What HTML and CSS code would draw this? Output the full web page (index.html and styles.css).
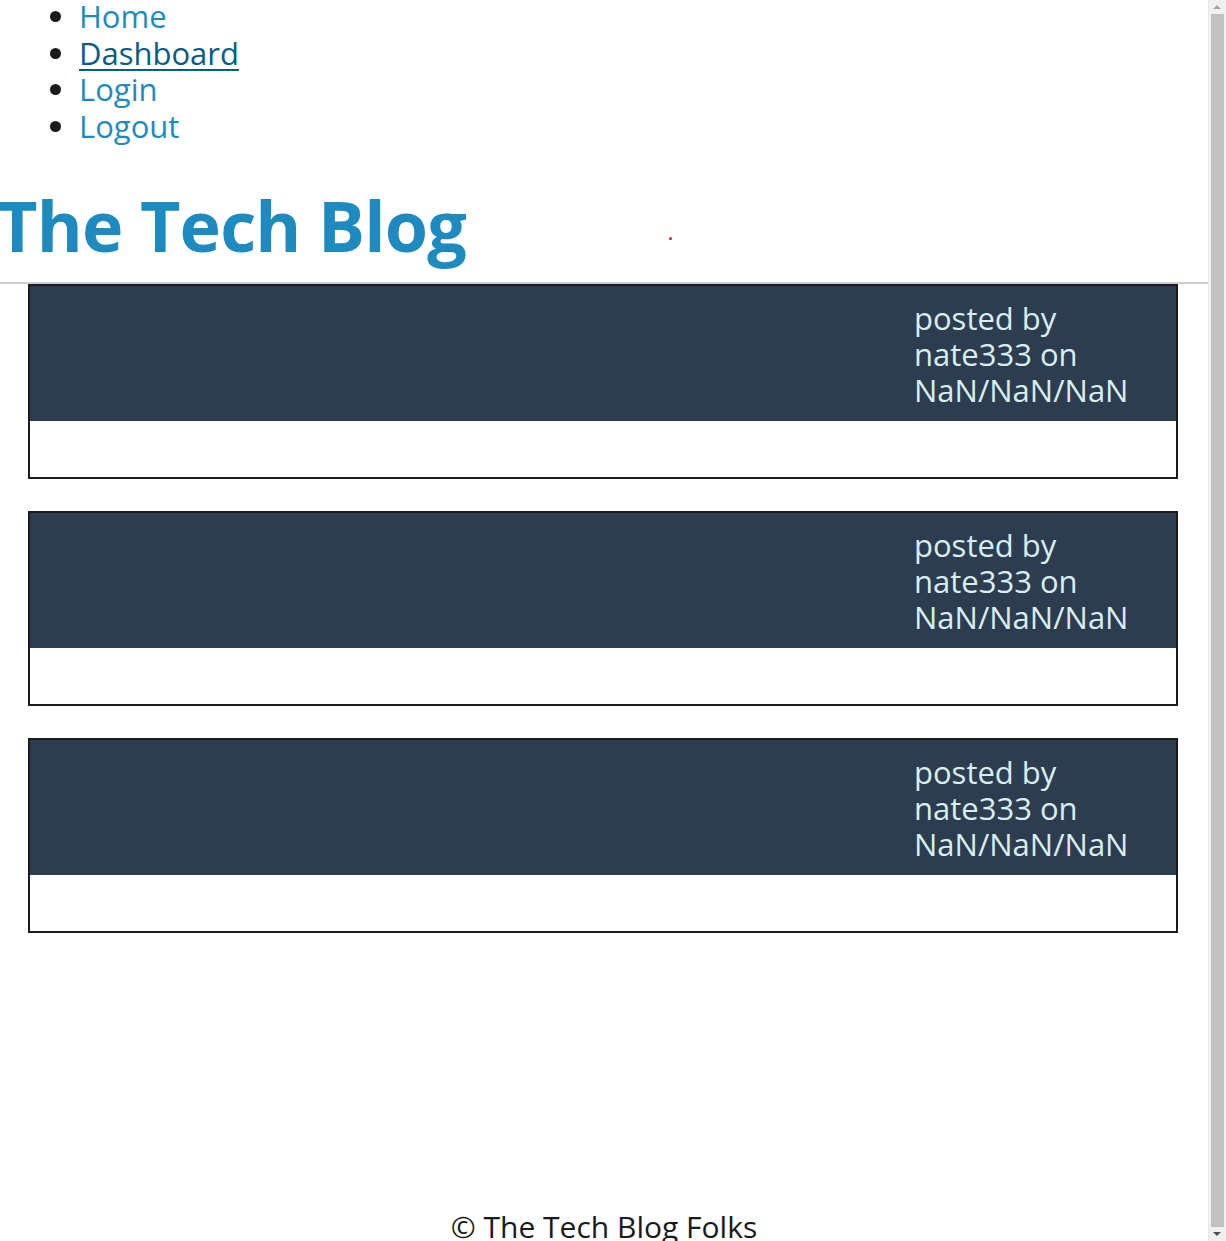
FILE: index.html
```html
<!DOCTYPE html>
<html lang="en">
<head>
<meta charset="utf-8">
<title>The Tech Blog</title>
<link rel="stylesheet" href="styles.css">
</head>
<body>
<div class="page">
  <header class="site-header">
    <nav>
      <ul class="nav-list">
        <li><a href="#" class="nav-link">Home</a></li>
        <li><a href="#" class="nav-link active">Dashboard</a></li>
        <li><a href="#" class="nav-link">Login</a></li>
        <li><a href="#" class="nav-link">Logout</a></li>
      </ul>
    </nav>
    <h1 class="site-title">The Tech Blog</h1>
    <span class="dot"></span>
  </header>
  <main class="posts">
    <article class="post">
      <div class="post-head"><h2 class="post-title"></h2><p class="post-meta">posted by nate333 on NaN/NaN/NaN</p></div>
      <div class="post-body"></div>
    </article>
    <article class="post">
      <div class="post-head"><h2 class="post-title"></h2><p class="post-meta">posted by nate333 on NaN/NaN/NaN</p></div>
      <div class="post-body"></div>
    </article>
    <article class="post">
      <div class="post-head"><h2 class="post-title"></h2><p class="post-meta">posted by nate333 on NaN/NaN/NaN</p></div>
      <div class="post-body"></div>
    </article>
  </main>
  <footer class="site-footer">© The Tech Blog Folks</footer>
</div>
<div class="scrollbar">
  <div class="sb-arrow sb-up"></div>
  <div class="sb-thumb"></div>
  <div class="sb-arrow sb-down"></div>
</div>
</body>
</html>
```
FILE: styles.css
```css
html, body {
  margin: 0;
  padding: 0;
  height: 100%;
  overflow: hidden;
}
body {
  display: flex;
  font-family: "Open Sans", "Noto Sans", sans-serif;
  color: #1a1a1a;
  background: #fff;
}
.page {
  flex: 1;
  display: flex;
  flex-direction: column;
  min-height: 100vh;
}
.site-header {
  position: relative;
  border-bottom: 2px solid #cfcfcf;
}
.nav-list {
  margin: -2px 0 0;
  padding-left: 79px;
  font-size: 31px;
  line-height: 36.7px;
}
.nav-list li::marker {
  color: #1a1a1a;
}
.nav-link {
  color: #1e8bc0;
  text-decoration: none;
}
.nav-link.active {
  color: #0b5b82;
  text-decoration: underline;
  text-decoration-thickness: 2px;
  text-underline-offset: 4px;
}
.site-title {
  margin: 30px 0 7px -3px;
  font-size: 70px;
  line-height: 100px;
  font-weight: 700;
  letter-spacing: -0.8px;
  color: #1e8bc0;
}
.dot {
  position: absolute;
  left: 669px;
  top: 237px;
  width: 3px;
  height: 3px;
  border-radius: 50%;
  background: #e02020;
}
.posts {
  display: flex;
  flex-direction: column;
  gap: 32px;
  padding: 0 30px 0 28px;
}
.post {
  border: 2px solid #1c1c1c;
}
.post-head {
  display: flex;
  justify-content: space-between;
  background: #2d3d4f;
  padding: 14px 30px 13px 16px;
}
.post-title {
  margin: 0;
}
.post-meta {
  margin: 0;
  width: 232px;
  font-size: 31px;
  line-height: 36px;
  color: #d8eef2;
}
.post-body {
  height: 56px;
  background: #fff;
}
.site-footer {
  margin-top: auto;
  text-align: center;
  font-size: 30px;
  line-height: 40px;
  margin-bottom: -6px;
  color: #1a1a1a;
}
.scrollbar {
  width: 18px;
  height: 100vh;
  flex: none;
  background: #f0f0f0;
  border-left: 1px solid #e8e8e8;
  box-sizing: border-box;
  display: flex;
  flex-direction: column;
  align-items: center;
  padding: 0 2px 0 1px;
}
.sb-arrow {
  height: 14px;
  width: 100%;
  display: flex;
  align-items: center;
  justify-content: center;
  flex: none;
}
.sb-up::before, .sb-down::before {
  content: "";
  width: 0;
  height: 0;
  border-left: 4px solid transparent;
  border-right: 4px solid transparent;
}
.sb-up::before {
  border-bottom: 4px solid #a3a3a3;
}
.sb-down::before {
  border-top: 4px solid #505050;
}
.sb-thumb {
  flex: 1;
  width: 13px;
  background: #c1c1c1;
  margin: 0;
}
```
